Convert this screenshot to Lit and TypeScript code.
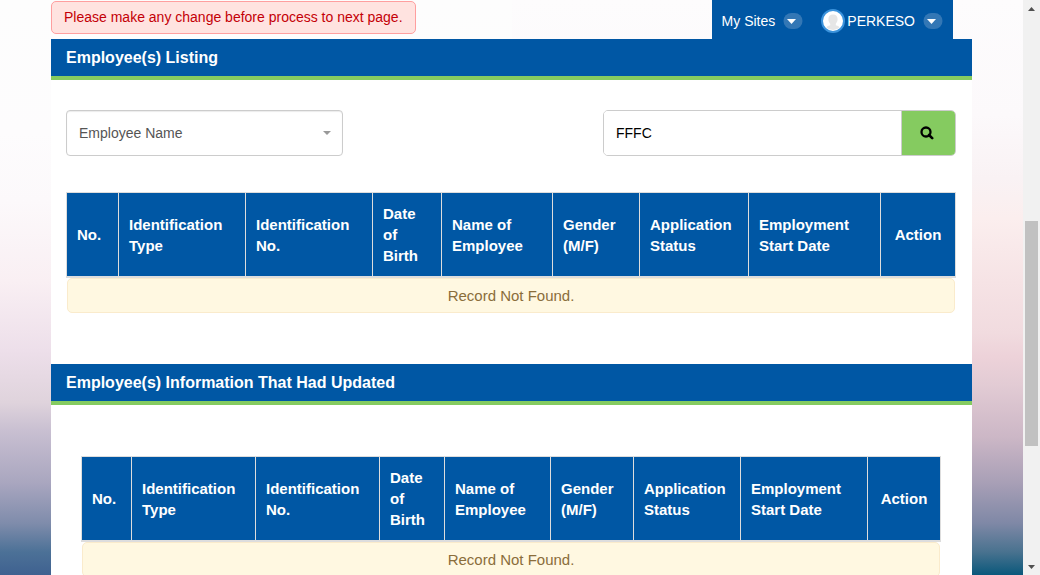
import { LitElement, html, css } from "lit";
import { customElement, property } from "lit/decorators.js";

const HEADINGS = [
  ["No."],
  ["Identification", "Type"],
  ["Identification", "No."],
  ["Date", "of", "Birth"],
  ["Name of", "Employee"],
  ["Gender", "(M/F)"],
  ["Application", "Status"],
  ["Employment", "Start Date"],
  ["Action"],
];

@customElement("employee-table")
class EmployeeTable extends LitElement {
  @property({ attribute: false }) weights: number[] = [];
  @property() label = "";

  static styles = css`
    :host {
      display: block;
    }
    .table {
      width: 100%;
      table-layout: fixed;
      border-collapse: separate;
      border-spacing: 0;
    }
    .head {
      box-sizing: border-box;
      padding: 10px;
      border-top: 1px solid #ddd;
      border-right: 1px solid #ddd;
      border-bottom: 2px solid #ddd;
      background: #0057a4;
      color: #fff;
      font-size: 15px;
      line-height: 21px;
      font-weight: bold;
      text-align: left;
      vertical-align: middle;
      white-space: nowrap;
    }
    .head:first-child {
      border-left: 1px solid #ddd;
    }
    .head:last-child {
      text-align: center;
    }
    .cell {
      padding: 0;
    }
    .empty {
      margin: 0 1px;
      padding: 7px;
      border: 1px solid #faebcc;
      border-radius: 5px;
      background: #fff8e1;
      color: #8a6d3b;
      font-size: 15px;
      line-height: 19px;
      text-align: center;
    }
  `;

  render() {
    const total = this.weights.reduce((a, b) => a + b, 0);
    return html`
      <table class="table" aria-label=${this.label}>
        <colgroup>
          ${this.weights.map((w) => html`<col style="width:${(w / total) * 100}%" />`)}
        </colgroup>
        <thead>
          <tr>
            ${HEADINGS.map(
              (lines) => html`<th class="head" scope="col">${lines.map((l, i) => (i ? html`<br />${l}` : l))}</th>`
            )}
          </tr>
        </thead>
        <tbody>
          <tr>
            <td class="cell" colspan="9"><div class="empty">Record Not Found.</div></td>
          </tr>
        </tbody>
      </table>
    `;
  }
}

@customElement("app-root")
class AppRoot extends LitElement {
  static styles = css`
    :host {
      display: flex;
      height: 100vh;
      overflow: hidden;
      font-family: "Liberation Sans", Arial, sans-serif;
      font-size: 14px;
      line-height: 20px;
    }
    .page {
      flex: 1;
      min-width: 0;
      padding: 0 51px;
      overflow: hidden;
      background:
        linear-gradient(#fdfcfd 0%, #fcf9fb 20%, #f9f2f4 31%, #fbeeee 38%, #f6e3e5 49%, #f1dbdf 58%, #edd2d9 62%, #e2cbd4 67%, #ccb7c6 76%, #a89fb6 84%, #7f88a6 91%, #49728f 96%, #0a587b 100%)
          right / 50% 100% no-repeat,
        linear-gradient(#fdfdfd 0%, #fdfcfd 23%, #fcf9fb 35%, #f9eff3 49%, #eddfea 61%, #dfd3dc 70%, #c8bfd1 75%, #a9a6bf 84%, #7f8cab 91%, #4c7197 96%, #3f6190 100%);
    }
    .top {
      display: flex;
      justify-content: space-between;
      align-items: flex-start;
      height: 39px;
    }
    .notice {
      margin-top: 1px;
      padding: 6px 12px;
      border: 1px solid #ff9f9f;
      border-radius: 5px;
      background: #ffe3e0;
      color: #c40007;
      line-height: 19px;
    }
    .nav {
      display: flex;
      align-items: center;
      gap: 18px;
      height: 39px;
      box-sizing: border-box;
      margin-right: 19px;
      padding: 3px 10px 0;
      background: #0057a4;
    }
    .menu {
      display: flex;
      align-items: center;
      gap: 8px;
      padding: 0;
      border: 0;
      background: none;
      color: #fff;
      font: inherit;
    }
    .user {
      display: flex;
      align-items: center;
      gap: 2px;
    }
    .icon {
      display: block;
    }
    .panel {
      background: #fff;
    }
    .title {
      margin: 0;
      padding: 8px 15px;
      border-bottom: 4px solid #85cb60;
      background: #0057a4;
      color: #fff;
      font-size: 16px;
      line-height: 21px;
      font-weight: bold;
    }
    .body {
      padding: 30px 16px 51px 15px;
    }
    .body.updated {
      padding: 51px 31px 51px 30px;
    }
    .filters {
      display: grid;
      grid-template-columns: 277fr 260fr 353fr;
      margin-bottom: 36px;
    }
    .pick {
      display: grid;
      align-items: center;
    }
    .select {
      grid-area: 1 / 1;
      appearance: none;
      box-sizing: border-box;
      width: 100%;
      height: 46px;
      padding: 0 12px;
      border: 1px solid #ccc;
      border-radius: 4px;
      background: #fff;
      box-shadow: inset 0 1px 1px rgba(0, 0, 0, 0.08);
      color: #555;
      font: inherit;
    }
    .caret {
      grid-area: 1 / 1;
      justify-self: end;
      margin-right: 12px;
      z-index: 1;
      pointer-events: none;
    }
    .search {
      grid-column: 3;
      display: flex;
      box-sizing: border-box;
      height: 46px;
      border: 1px solid #ccc;
      border-radius: 5px;
      overflow: hidden;
    }
    .query {
      flex: 1;
      min-width: 0;
      padding: 0 12px;
      border: 0;
      background: #fff;
      color: #000;
      font: inherit;
      outline: none;
    }
    .go {
      display: flex;
      align-items: center;
      justify-content: center;
      width: 54px;
      padding: 0 3px 0 0;
      border: 0;
      border-left: 1px solid #ccc;
      background: #85cb60;
    }
    .scroll {
      display: grid;
      grid-template-rows: 17px 204fr 225fr 112fr 17px;
      justify-items: center;
      align-items: center;
      width: 17px;
      background: #f1f1f1;
    }
    .thumb {
      grid-row: 3;
      width: 13px;
      height: 100%;
      background: #c1c1c1;
    }
    .down {
      grid-row: 5;
    }
  `;

  private pill() {
    return html`<svg class="icon" width="20" height="16" viewBox="0 0 20 16" aria-hidden="true">
      <rect x="0.5" width="19" height="16" rx="8" fill="#3377b5" />
      <path d="M4 6h9l-4.5 5z" fill="#fff" />
    </svg>`;
  }

  render() {
    return html`
      <main class="page">
        <header class="top">
          <div class="notice" role="alert">Please make any change before process to next page.</div>
          <nav class="nav">
            <button class="menu" type="button">My Sites ${this.pill()}</button>
            <button class="menu" type="button">
              <span class="user">
                <svg class="icon" width="24" height="24" viewBox="0 0 24 24" aria-hidden="true">
                  <circle cx="12" cy="12" r="11" fill="#fff" stroke="#3b93dc" stroke-width="2" />
                  <path d="M12 5.5c-3 0-4.6 2-4.6 4.8 0 2 .8 3.400 1.800 4.400v1.500c-1.600.5-3 1.100-4 2a9.500 9.500 0 0 0 13.600 0c-1-.9-2.400-1.500-4-2v-1.500c1-1 1.800-2.400 1.800-4.400 0-2.800-1.600-4.800-4.600-4.800z" fill="#e6e6e6" />
                </svg>
                PERKESO
              </span>
              ${this.pill()}
            </button>
          </nav>
        </header>

        <section class="panel">
          <h2 class="title">Employee(s) Listing</h2>
          <div class="body">
            <form class="filters" @submit=${(e: Event) => e.preventDefault()}>
              <div class="pick">
                <select class="select" aria-label="Search by">
                  <option>Employee Name</option>
                </select>
                <svg class="caret" width="8" height="4" viewBox="0 0 8 4" aria-hidden="true">
                  <path d="M0 0h8L4 4z" fill="#999" />
                </svg>
              </div>
              <div class="search">
                <input class="query" type="text" aria-label="Search text" .value=${"FFFC"} />
                <button class="go" type="submit" aria-label="Search">
                  <svg class="icon" width="14" height="14" viewBox="0 0 14 14" aria-hidden="true">
                    <circle cx="6" cy="6" r="4.500" fill="none" stroke="#000" stroke-width="2.300" />
                    <path d="M9 9l3.200 3.200" stroke="#000" stroke-width="2.600" stroke-linecap="round" />
                  </svg>
                </button>
              </div>
            </form>
            <employee-table
              label="Employee(s) Listing"
              .weights=${[53, 127, 127, 69, 111, 87, 109, 132, 75]}
            ></employee-table>
          </div>
        </section>

        <section class="panel">
          <h2 class="title">Employee(s) Information That Had Updated</h2>
          <div class="body updated">
            <employee-table
              label="Employee(s) Information That Had Updated"
              .weights=${[51, 124, 124, 65, 106, 83, 107, 127, 73]}
            ></employee-table>
          </div>
        </section>
      </main>

      <div class="scroll" aria-hidden="true">
        <svg class="icon" width="7" height="4" viewBox="0 0 7 4"><path d="M0 4h7L3.500 0z" fill="#505050" /></svg>
        <div class="thumb"></div>
        <svg class="icon down" width="7" height="4" viewBox="0 0 7 4"><path d="M0 0h7L3.500 4z" fill="#505050" /></svg>
      </div>
    `;
  }
}
